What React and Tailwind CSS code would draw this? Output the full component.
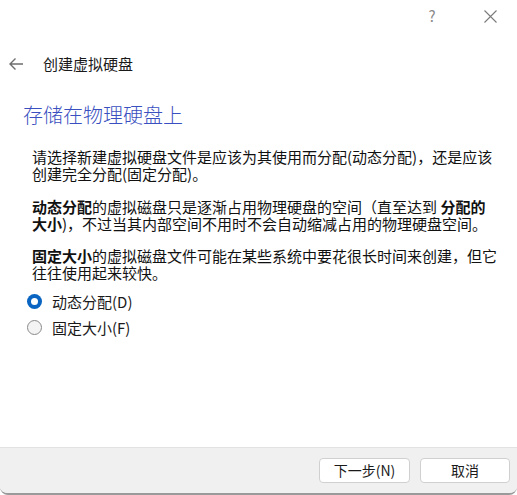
import React, { useState } from 'react';

const font = { fontFamily: '"Noto Sans CJK SC", "Liberation Sans", sans-serif' };

function B({ children }) {
  return <b className="inline-block leading-[17px] font-bold">{children}</b>;
}

function Radio({ checked, label, onClick }) {
  return (
    <label className="flex items-center gap-[10px] cursor-pointer h-[26px]" onClick={onClick}>
      {checked ? (
        <span className="w-[15px] h-[15px] rounded-full bg-[#0a64c2] flex items-center justify-center">
          <span className="w-[7px] h-[7px] rounded-full bg-white" />
        </span>
      ) : (
        <span className="w-[15px] h-[15px] rounded-full border border-[#8a8a8a] bg-[#f4f4f4]" />
      )}
      <span className="text-[15px] text-[#1a1a1a]">{label}</span>
    </label>
  );
}

export default function App() {
  const [mode, setMode] = useState('dynamic');

  return (
    <div
      className="w-[517px] h-[495px] bg-white flex flex-col overflow-hidden rounded-b-[8px] border-b-2 border-[#9a9a9a]"
      style={font}
    >
      {/* Title bar */}
      <div className="h-[33px] flex items-center justify-end text-[#8a8a8a]">
        <span className="w-[46px] text-center text-[15px] mr-[12px]">?</span>
        <span className="w-[46px] flex justify-center mr-[4px]">
          <svg width="13" height="13" viewBox="0 0 13 13" stroke="#7a7a7a" strokeWidth="1.1" fill="none">
            <path d="M0.5 0.5 L12.5 12.5 M12.5 0.5 L0.5 12.5" />
          </svg>
        </span>
      </div>

      {/* Header */}
      <div className="flex items-center h-[30px] mt-[16px] pl-[8px]">
        <svg width="16" height="14" viewBox="0 0 16 14" fill="none" stroke="#6e6e6e" strokeWidth="1.4">
          <path d="M15 7 H2 M7.5 1.5 L2 7 L7.5 12.5" />
        </svg>
        <span className="ml-[19px] text-[15px] text-[#1a1a1a]">创建虚拟硬盘</span>
      </div>

      {/* Content */}
      <div className="flex-1 pl-[23px]">
        <h1 className="mt-[23px] text-[20px] leading-[26px] text-[#3a4fc0]" style={{ fontWeight: 300 }}>
          存储在物理硬盘上
        </h1>
        <div className="ml-[9px] mt-[20px] w-[467px] text-[15px] leading-[17px] text-[#111]">
          <p>请选择新建虚拟硬盘文件是应该为其使用而分配(动态分配)，还是应该创建完全分配(固定分配)。</p>
          <p className="mt-[16px]">
            <B>动态分配</B>的虚拟磁盘只是逐渐占用物理硬盘的空间（直至达到 <B>分配的</B><B>大小</B>)，不过当其内部空间不用时不会自动缩减占用的物理硬盘空间。
          </p>
          <p className="mt-[15px]">
            <B>固定大小</B>的虚拟磁盘文件可能在某些系统中要花很长时间来创建，但它往往使用起来较快。
          </p>
          <div className="mt-[7px] -ml-[5px]">
            <Radio checked={mode === 'dynamic'} label="动态分配(D)" onClick={() => setMode('dynamic')} />
            <Radio checked={mode === 'fixed'} label="固定大小(F)" onClick={() => setMode('fixed')} />
          </div>
        </div>
      </div>

      {/* Footer */}
      <div className="h-[46px] bg-[#f0f0f0] border-t border-[#e2e2e2] flex items-center justify-end gap-[10px] pr-[7px]">
        <button className="w-[91px] h-[25px] bg-white border border-[#d0d0d0] rounded-[4px] text-[14px] text-[#1a1a1a]">
          下一步(N)
        </button>
        <button className="w-[90px] h-[25px] bg-white border border-[#d0d0d0] rounded-[4px] text-[14px] text-[#1a1a1a]">
          取消
        </button>
      </div>
    </div>
  );
}
